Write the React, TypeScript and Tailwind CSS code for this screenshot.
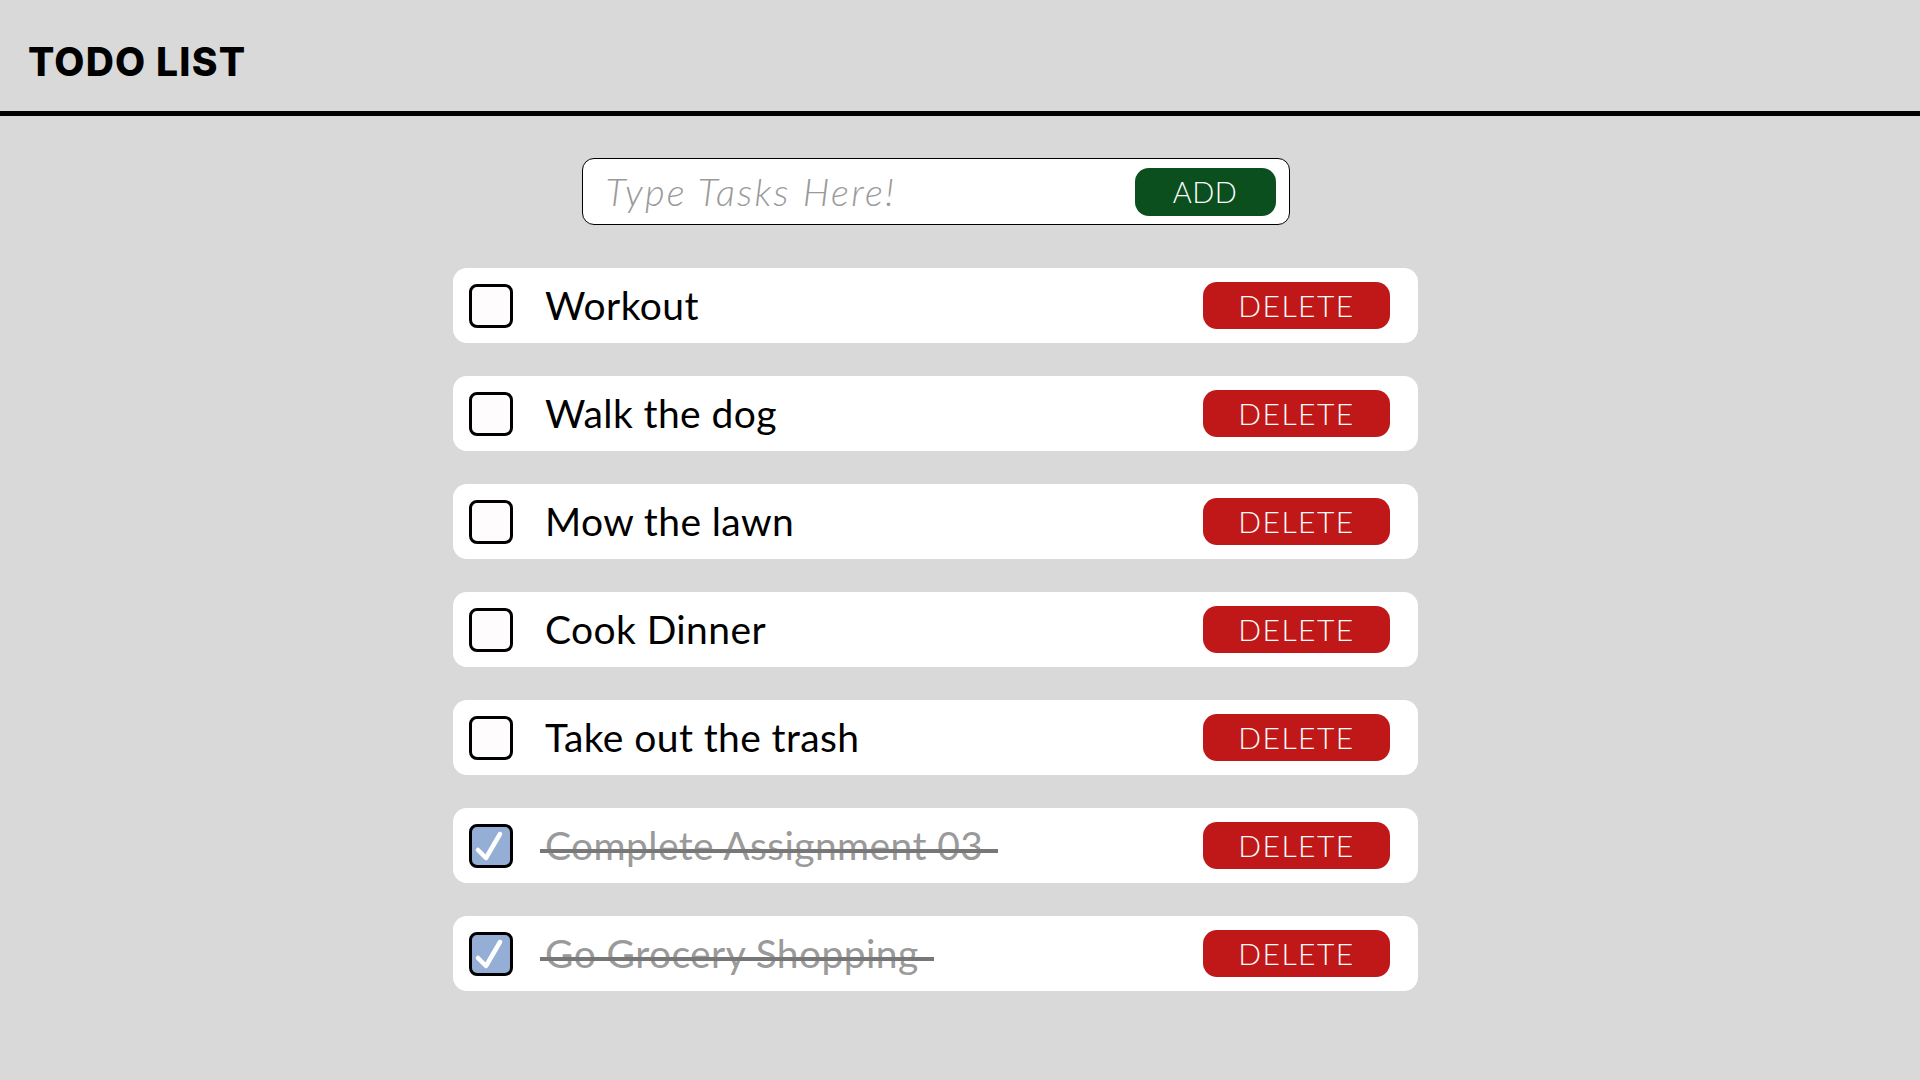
import { useState } from 'react';

interface Task {
    id: number;
    title: string;
    done: boolean;
}

const initialTasks: Task[] = [
    { id: 1, title: 'Workout', done: false },
    { id: 2, title: 'Walk the dog', done: false },
    { id: 3, title: 'Mow the lawn', done: false },
    { id: 4, title: 'Cook Dinner', done: false },
    { id: 5, title: 'Take out the trash', done: false },
    { id: 6, title: 'Complete Assignment 03', done: true },
    { id: 7, title: 'Go Grocery Shopping', done: true },
];

function CheckBox({ checked, onClick }: { checked: boolean; onClick: () => void }) {
    return (
        <button
            type="button"
            onClick={onClick}
            className={
                checked
                    ? 'w-[44px] h-[44px] shrink-0 rounded-[8px] border-[3px] border-black bg-[#95aed6] flex items-center justify-center'
                    : 'w-[44px] h-[44px] shrink-0 rounded-[8px] border-[3px] border-black bg-[#fffcfd]'
            }
        >
            {checked && (
                <svg width="38" height="38" viewBox="0 0 38 38" fill="none">
                    <path d="M6 23 L14 31 L28 7" stroke="white" strokeWidth="4.5" strokeLinecap="round" strokeLinejoin="round" />
                </svg>
            )}
        </button>
    );
}

export default function App() {
    const [tasks, setTasks] = useState<Task[]>(initialTasks);
    const [text, setText] = useState('');

    const addTask = () => {
        if (!text.trim()) return;
        setTasks([...tasks, { id: Date.now(), title: text.trim(), done: false }]);
        setText('');
    };

    return (
        <div className="min-h-screen bg-[#d9d9d9] font-['Lato',sans-serif] text-black">
            <header className="h-[116px] border-b-[5px] border-black flex items-center pl-[28px] pt-[11px]">
                <h1 className="font-['Inter',sans-serif] font-extrabold text-[39px] leading-none tracking-[1.2px]">TODO LIST</h1>
            </header>

            <main className="flex flex-col items-center pr-[49px] pt-[42px] pb-10">
                <div className="w-[708px] h-[67px] bg-white border border-black rounded-[12px] flex items-center pl-[23px] pr-[13px]">
                    <input
                        value={text}
                        onChange={(e) => setText(e.target.value)}
                        placeholder="Type Tasks Here!"
                        className="flex-1 min-w-0 bg-transparent outline-none text-[38px] font-light italic tracking-[2.3px] placeholder:text-[#9a9a9a]"
                    />
                    <button
                        type="button"
                        onClick={addTask}
                        className="w-[141px] h-[48px] rounded-[14px] bg-[#0b4f1f] text-white text-[29px] font-light tracking-[0.5px]"
                    >
                        ADD
                    </button>
                </div>

                <div className="mt-[43px] flex flex-col gap-[33px]">
                    {tasks.map((task) => (
                        <div key={task.id} className="w-[965px] h-[75px] bg-white rounded-[14px] flex items-center pl-[16px] pr-[28px]">
                            <CheckBox
                                checked={task.done}
                                onClick={() => setTasks(tasks.map((t) => (t.id === task.id ? { ...t, done: !t.done } : t)))}
                            />
                            <div className="flex-1 pl-[32px]">
                                <span className={task.done ? 'relative inline-block text-[39px] leading-none tracking-[0.4px] text-[#9a9a9a]' : 'inline-block text-[39px] leading-none tracking-[0.4px]'}>
                                    {task.title}
                                    {task.done && <span className="absolute left-[-5px] right-[-15px] top-[23px] h-[4px] bg-[#777777]" />}
                                </span>
                            </div>
                            <button
                                type="button"
                                onClick={() => setTasks(tasks.filter((t) => t.id !== task.id))}
                                className="w-[187px] h-[47px] rounded-[14px] bg-[#c01818] text-white text-[30px] font-light tracking-[1.5px]"
                            >
                                DELETE
                            </button>
                        </div>
                    ))}
                </div>
            </main>
        </div>
    );
}
